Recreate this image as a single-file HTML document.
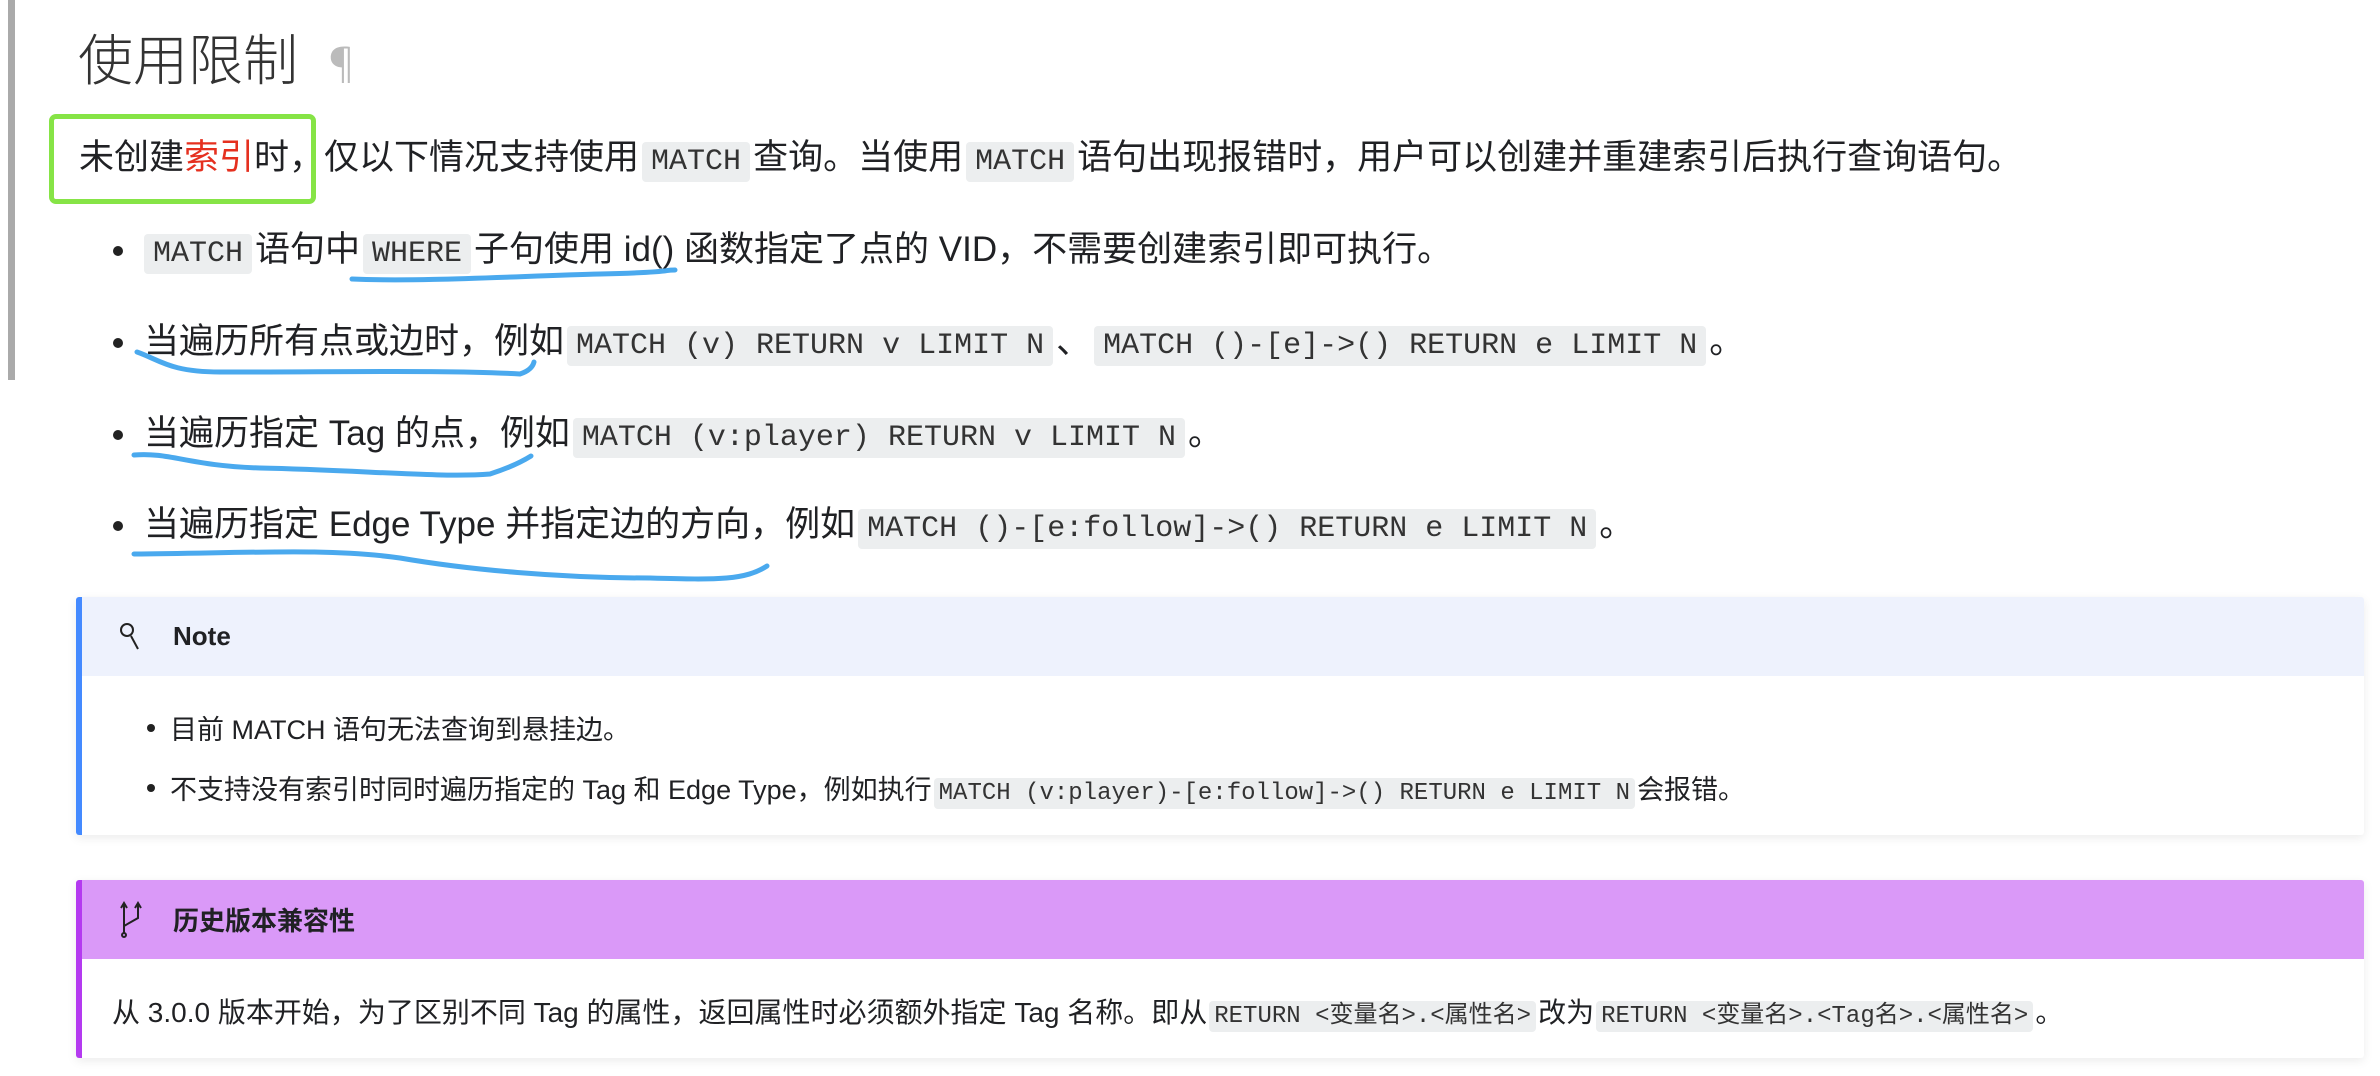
<!DOCTYPE html>
<html><head><meta charset="utf-8"><style>
body{margin:0;width:2380px;height:1076px;background:#fff;position:relative;overflow:hidden;font-family:"Liberation Sans","Noto Sans CJK SC",sans-serif;color:#202124}
.a{position:absolute;white-space:nowrap}
.bar{position:absolute;left:8px;top:0;width:7px;height:380px;background:#aaa}
h1{position:absolute;left:78px;top:16px;margin:0;font-weight:300;font-size:55px;color:#333;font-family:"Noto Sans CJK SC",sans-serif}
h1 span{color:#bbb;font-size:44px;margin-left:22px}
.p{font-size:35px;line-height:46px}
code{font-family:"Liberation Mono","Noto Sans CJK SC",monospace;background:#eceeef;border-radius:4px;padding:3px 9px;margin:0 3px;font-size:30px;color:#333}
.dot{position:absolute;width:10px;height:10px;border-radius:50%;background:#222}
.green{position:absolute;left:49px;top:114px;width:257px;height:80px;border:5px solid #86e446;border-radius:7px}
.box{position:absolute;left:76px;width:2282px;background:#fff;box-shadow:0 3px 10px rgba(0,0,0,.08);border-radius:3px;overflow:hidden}
.box .hd{height:79px;display:flex;align-items:center;padding-left:97px;font-weight:bold;font-size:26px;position:relative}
.sm{font-size:27px}
.sm code{font-size:24px;padding:2px 5px;margin:0 2px}
</style></head><body>
<div class="bar"></div>
<h1>使用限制<span>¶</span></h1>
<div class="green"></div>
<div class="a p" style="left:79px;top:135px">未创建<span style="color:#e5301f">索引</span>时，仅以下情况支持使用<code>MATCH</code>查询。当使用<code>MATCH</code>语句出现报错时，用户可以创建并重建索引后执行查询语句。</div>
<div class="dot" style="left:113px;top:246px"></div>
<div class="a p" style="left:144px;top:227px"><code style="margin-left:0">MATCH</code>语句中<code>WHERE</code>子句使用 id() 函数指定了点的 VID，不需要创建索引即可执行。</div>
<div class="dot" style="left:113px;top:338px"></div>
<div class="a p" style="left:144px;top:319px">当遍历所有点或边时，例如<code>MATCH (v) RETURN v LIMIT N</code>、<code>MATCH ()-[e]-&gt;() RETURN e LIMIT N</code>。</div>
<div class="dot" style="left:113px;top:430px"></div>
<div class="a p" style="left:144px;top:411px">当遍历指定 Tag 的点，例如<code>MATCH (v:player) RETURN v LIMIT N</code>。</div>
<div class="dot" style="left:113px;top:521px"></div>
<div class="a p" style="left:144px;top:502px">当遍历指定 Edge Type 并指定边的方向，例如<code>MATCH ()-[e:follow]-&gt;() RETURN e LIMIT N</code>。</div>
<svg class="a" style="left:0;top:0" width="2380" height="1076" fill="none" stroke="#4aa9ee" stroke-width="5" stroke-linecap="round">
<path d="M352 279 C420 282 520 276 600 274 S660 270 675 270"/>
<path d="M137 352 C160 360 170 372 220 372 C350 372 450 370 520 374 Q532 370 534 362"/>
<path d="M134 455 C170 452 190 466 260 468 C360 470 440 478 490 474 Q515 466 531 456"/>
<path d="M134 554 C250 553 330 548 400 558 C470 570 560 578 650 578 C720 580 745 580 767 566"/>
</svg>
<div class="box" style="top:597px;height:238px;border-left:6px solid #448aff">
<div class="hd" style="background:#eef2fd;padding-left:91px"><svg class="a" style="left:36px;top:24px" width="30" height="34" fill="none" stroke="#222" stroke-width="2"><circle cx="9" cy="9" r="6"/><path d="M13 15 L20 28"/></svg>Note</div>
<div class="dot" style="left:65px;top:127px;width:8px;height:8px"></div>
<div class="a sm" style="left:88px;top:111px">目前 MATCH 语句无法查询到悬挂边。</div>
<div class="dot" style="left:65px;top:187px;width:8px;height:8px"></div>
<div class="a sm" style="left:88px;top:171px">不支持没有索引时同时遍历指定的 Tag 和 Edge Type，例如执行<code>MATCH (v:player)-[e:follow]-&gt;() RETURN e LIMIT N</code>会报错。</div>
</div>
<div class="box" style="top:880px;height:178px;border-left:6px solid #b43af0">
<div class="hd" style="background:#da99f8;padding-left:91px"><svg class="a" style="left:36px;top:20px" width="30" height="40" fill="none" stroke="#222" stroke-width="2"><path d="M6 4 V34 M20 4 V18 L6 26 M3 8 L6 3 L9 8 M17 8 L20 3 L23 8"/><circle cx="6" cy="35" r="2"/></svg>历史版本兼容性</div>
<div class="a" style="left:30px;top:111px;font-size:28px">从 3.0.0 版本开始，为了区别不同 Tag 的属性，返回属性时必须额外指定 Tag 名称。即从<code style="font-size:24px;padding:2px 5px;margin:0 2px">RETURN &lt;变量名&gt;.&lt;属性名&gt;</code>改为<code style="font-size:24px;padding:2px 5px;margin:0 2px">RETURN &lt;变量名&gt;.&lt;Tag名&gt;.&lt;属性名&gt;</code>。</div>
</div>
</body></html>
